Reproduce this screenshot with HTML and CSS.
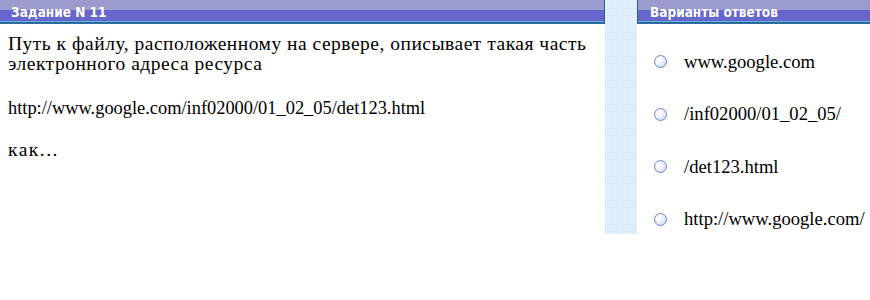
FILE: index.html
```html
<!DOCTYPE html>
<html lang="ru">
<head>
<meta charset="utf-8">
<link rel="stylesheet" href="styles.css">
</head>
<body>
<div class="page">
  <section class="task">
    <div class="head head-left">Задание N 11</div>
    <div class="question">
      <p class="para cyr">Путь к файлу, расположенному на сервере, описывает такая часть электронного адреса ресурса</p>
      <p class="para url">http://www.google.com/inf02000/01_02_05/det123.html</p>
      <p class="para cyr cyr-short">как...</p>
    </div>
  </section>
  <div class="strip"></div>
  <section class="answers">
    <div class="head head-right">Варианты ответов</div>
    <ul class="options">
      <li class="option"><span class="radio"></span><span class="label">www.google.com</span></li>
      <li class="option"><span class="radio"></span><span class="label">/inf02000/01_02_05/</span></li>
      <li class="option"><span class="radio"></span><span class="label">/det123.html</span></li>
      <li class="option"><span class="radio"></span><span class="label">http://www.google.com/</span></li>
    </ul>
  </section>
</div>
</body>
</html>
```

FILE: styles.css
```css
html, body {
  margin: 0;
  padding: 0;
  background: #ffffff;
}
.page {
  display: flex;
  align-items: flex-start;
  width: 870px;
}
.task {
  width: 605px;
  flex: none;
}
.answers {
  flex: 1;
}
.head {
  height: 24px;
  box-sizing: border-box;
  padding-top: 1px;
  background:
    linear-gradient(to bottom,
      #9c9bcd 0, #9c9bcd 10px,
      #6666cc 10px, #6666cc 21px,
      #6aaee0 21px, #6aaee0 22px,
      #2f6a9c 22px, #2f6a9c 24px);
  color: #ffffff;
  font-family: "DejaVu Sans Condensed", "DejaVu Sans", Verdana, sans-serif;
  font-stretch: condensed;
  font-weight: bold;
  font-size: 13.5px;
  line-height: 23px;
  white-space: nowrap;
}
.head-left {
  padding-left: 11px;
  border-right: 1px solid #2f5f8f;
}
.head-right {
  padding-left: 12px;
  border-left: 1px solid #2f5f8f;
}
.strip {
  width: 32px;
  height: 234px;
  flex: none;
  background-color: #dcedf9;
  background-image:
    radial-gradient(circle, #eef7fd 0.7px, transparent 1px);
  background-size: 3px 3px;
}
.question {
  padding: 10px 0 0 8px;
  font-family: "Liberation Serif", "Times New Roman", serif;
  color: #000;
}
.para {
  margin: 0 0 24px 0;
}
.url {
  font-size: 18.4px;
  line-height: 21.5px;
  margin-bottom: 20px;
}
.cyr {
  font-size: 19.5px;
  line-height: 20px;
  letter-spacing: 0.5px;
}
.cyr-short {
  letter-spacing: 1.5px;
}
.options {
  list-style: none;
  margin: 0;
  padding: 27px 0 0 17px;
}
.option {
  display: flex;
  align-items: center;
  height: 21px;
  margin-bottom: 31.6px;
  font-family: "Liberation Serif", "Times New Roman", serif;
  font-size: 18.6px;
  color: #000;
  white-space: nowrap;
}
.radio {
  width: 11px;
  height: 11px;
  border-radius: 50%;
  border: 1px solid #7186cc;
  background: radial-gradient(circle at 35% 35%, #ffffff 0, #f2f4fb 35%, #c9d1ee 100%);
  flex: none;
  margin-right: 17px;
}
```
